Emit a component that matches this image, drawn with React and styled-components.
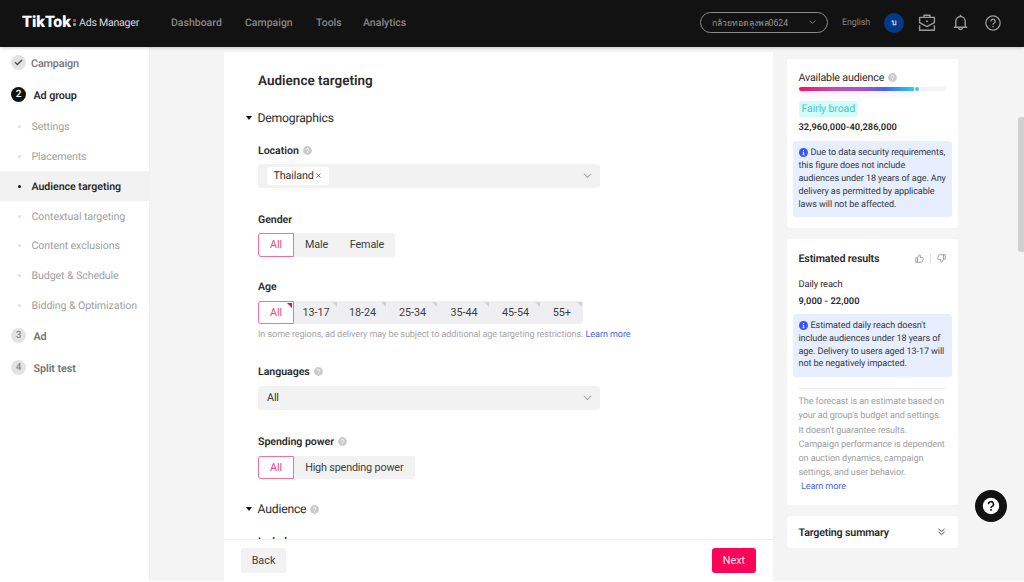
import React from 'react';
import styled, { createGlobalStyle } from 'styled-components';

const GlobalStyle = createGlobalStyle`
    * {
        box-sizing: border-box;
    }

    body {
        margin: 0;
        background: #ffffff;
        color: #2b2b2b;
        font-family: Roboto, "Noto Sans", "Liberation Sans", sans-serif;
        font-size: 11px;
        text-rendering: geometricPrecision;
        overflow: hidden;
    }

    button {
        font: inherit;
        border: 0;
        padding: 0;
    }

    svg {
        display: block;
        flex: none;
    }
`;

const Page = styled.div`
    display: flex;
    flex-direction: column;
    width: 1024px;
    height: 581px;
    background: #f4f4f4;
    white-space: nowrap;
    overflow: hidden;
`;

/* Header */
const Header = styled.header`
    display: flex;
    align-items: center;
    flex: none;
    height: 47px;
    padding: 0 23.5px 2px 22px;
    background: #121212;
    box-shadow: 0 1px 3px rgba(0, 0, 0, 0.2);
    z-index: 1;
`;
const Brand = styled.div`
    display: flex;
    align-items: center;
    width: 149px;
    color: #ffffff;
`;
const BrandName = styled.span`
    width: 51px;
    margin-top: -3px;
    font-size: 15.8px;
    font-weight: 900;
`;
const BrandDots = styled.span`
    display: grid;
    gap: 1px;
    width: 3px;
    margin: -1px 3px 0 0;

    &::before,
    &::after {
        content: '';
        width: 3px;
        height: 3px;
        border-radius: 1px;
        background: #e8255c;
    }

    &::after {
        background: #2bc4cb;
    }
`;
const BrandSub = styled.span`
    font-size: 10.6px;
    letter-spacing: -0.25px;
    color: #d8d8d8;
`;
const Nav = styled.nav`
    display: flex;
    gap: 23px;
    flex: 1;
`;
const NavLink = styled.a`
    width: ${props => props.$width}px;
    font-size: 10.5px;
    font-weight: 500;
    color: #868686;
`;
const Account = styled.button`
    display: flex;
    align-items: center;
    justify-content: space-between;
    width: 128.5px;
    height: 21px;
    padding: 0 11px;
    border: 1px solid #8c8c8c;
    border-radius: 11px;
    background: transparent;
    color: #969696;
    font-size: 8.7px;
`;
const Language = styled.span`
    width: 28px;
    margin: 0 14px;
    font-size: 9px;
    letter-spacing: -0.15px;
    color: #858585;
`;
const Avatar = styled.span`
    width: 20px;
    height: 20px;
    margin-right: 13.5px;
    border-radius: 50%;
    background: #003a88;
    color: #d5dcea;
    font-size: 8px;
    font-weight: 600;
    line-height: 20px;
    text-align: center;
`;
const HeaderIcons = styled.div`
    display: flex;
    align-items: center;
    gap: 17px;
    color: #9a9a9a;
`;

/* Sidebar */
const Body = styled.div`
    display: flex;
    flex: 1;
    min-height: 0;
`;
const Sidebar = styled.aside`
    flex: none;
    width: 150px;
    background: #ffffff;
    border-right: 1px solid #f0f0f0;
`;
const Step = styled.div`
    display: flex;
    align-items: center;
    height: 32px;
    padding-left: 11px;
    color: ${props => props.$color || '#747474'};
    font-size: 10.8px;
    font-weight: ${props => (props.$light ? 500 : 600)};
    letter-spacing: ${props => (props.$light ? -0.15 : -0.1)}px;
`;
const StepBadge = styled.span`
    display: grid;
    place-items: center;
    width: 15px;
    height: 15px;
    margin: -1px ${props => (props.$done ? 5 : 7.5)}px 0 0;
    border-radius: 50%;
    background: ${props => (props.$active ? '#121212' : '#e3e3e3')};
    color: ${props => (props.$active ? '#ffffff' : '#8b8b8b')};
    font-size: 10px;
    font-weight: 500;
    line-height: 16px;
`;
const SubStep = styled.div`
    display: flex;
    align-items: center;
    height: 29.9px;
    padding: 0.9px 0 0 17.5px;
    background: ${props => (props.$active ? '#f2f2f2' : 'transparent')};
    color: ${props => (props.$active ? '#2b2b2b' : '#a0a0a0')};
    font-size: 10.6px;
    font-weight: ${props => (props.$active ? 600 : 400)};
    letter-spacing: ${props => (props.$active ? -0.03 : -0.09)}px;

    &::before {
        content: '';
        width: 3px;
        height: 3px;
        margin-right: 11px;
        border-radius: 50%;
        background: ${props => (props.$active ? '#121212' : '#e0e0e0')};
    }
`;

/* Form */
const Panel = styled.main`
    display: flex;
    flex-direction: column;
    flex: none;
    width: 549px;
    margin: 5px 14px 0 74px;
    background: #ffffff;
`;
const Form = styled.div`
    flex: 1;
    min-height: 0;
    padding: 19px 34px 0;
    overflow: hidden;
`;
const Title = styled.h1`
    height: 20px;
    margin: 0 0 16.5px;
    font-size: 13.5px;
    font-weight: 600;
    line-height: 20px;
`;
const Section = styled.h2`
    display: flex;
    align-items: center;
    gap: 4px;
    height: 20px;
    margin: 0 0 15.5px -12px;
    font-size: 12.2px;
    font-weight: 400;
    letter-spacing: -0.2px;

    &::before {
        content: '';
        margin-right: 1.5px;
        border: 3.5px solid transparent;
        border-top: 4px solid #121212;
        border-bottom: 0;
    }
`;
const Field = styled.div`
    margin-bottom: ${props => props.$gap}px;
`;
const Label = styled.div`
    display: flex;
    align-items: center;
    gap: 4px;
    height: 14px;
    margin-bottom: ${props => props.$space || 6.5}px;
    font-size: 10.6px;
    font-weight: 600;
    letter-spacing: -0.05px;
`;
const Select = styled.div`
    display: flex;
    align-items: center;
    justify-content: space-between;
    width: 341.5px;
    height: 24px;
    padding: 0.5px 8px 0 9px;
    border-radius: 3px;
    background: #f2f2f2;
    color: #333333;
    font-size: 10.8px;
    letter-spacing: -0.15px;
`;
const Tag = styled.span`
    display: flex;
    align-items: center;
    gap: 2px;
    height: 18px;
    padding: 0 8px 0 6.5px;
    border-radius: 3px;
    background: #ffffff;
`;
const Segments = styled.div`
    display: flex;
    width: max-content;
    height: 23.5px;
    border-radius: 3px;
    background: ${props => (props.$age ? '#efeff1' : '#f2f2f2')};
`;
const Segment = styled.button`
    position: relative;
    width: ${props => props.$width}px;
    border: ${props => (props.$active ? '1px solid #f76e99' : '0')};
    border-radius: ${props => (props.$active ? '3px 0 0 3px' : '0')};
    background: ${props => (props.$active ? '#ffffff' : 'transparent')};
    color: ${props => (props.$active ? '#f5457c' : '#3d3d3d')};
    font-size: 10.8px;
    letter-spacing: ${props => (props.$corner ? -0.08 : -0.17)}px;
`;
const Corner = styled.span`
    position: absolute;
    top: 1px;
    right: 1px;
    border-top: 5px solid ${props => (props.$active ? '#f20a4f' : '#d2d2d4')};
    border-left: 5px solid transparent;
`;
const Note = styled.p`
    height: 14px;
    margin: 3px 0 0;
    font-size: 9.1px;
    line-height: 17px;
    letter-spacing: -0.1px;
    color: #a6a6a6;
`;
const Link = styled.a`
    color: #4a63f0;
`;
const Footer = styled.footer`
    display: flex;
    align-items: center;
    justify-content: space-between;
    flex: none;
    height: 42px;
    padding: 0 17px;
    border-top: 1px solid #f0f0f0;
`;
const Button = styled.button`
    width: ${props => (props.$primary ? 44 : 45)}px;
    height: 25px;
    border-radius: 3px;
    background: ${props => (props.$primary ? '#fb0558' : '#f2f2f2')};
    color: ${props => (props.$primary ? '#ffe3ec' : '#3d3d3d')};
    font-size: 10.8px;
`;

/* Right column */
const Aside = styled.aside`
    display: flex;
    flex-direction: column;
    flex: none;
    gap: 11px;
    width: 171px;
    padding-top: 12px;
`;
const Card = styled.section`
    height: ${props => props.$height}px;
    padding: 0 12px 0 11.5px;
    border-radius: 3px;
    background: #ffffff;
`;
const CardHead = styled.div`
    display: flex;
    align-items: center;
    gap: 4px;
    height: ${props => props.$height}px;
    padding-top: ${props => props.$drop || 0}px;
    font-size: 10.7px;
    font-weight: ${props => (props.$bold ? 600 : 400)};
    letter-spacing: -0.17px;
`;
const Spacer = styled.span`
    flex: 1;
`;
const HeadDivider = styled.span`
    width: 1px;
    height: 9px;
    margin: 0 2px;
    background: #dddddd;
`;
const Meter = styled.div`
    display: flex;
    align-items: center;
    gap: 1px;
    height: 4px;
    border-radius: 2px;
    background: #f3f3f3;
`;
const MeterFill = styled.div`
    width: 115px;
    height: 4px;
    border-radius: 2px 0 0 2px;
    background: linear-gradient(90deg, #fb0f5c 0%, #c34bb5 30%, #b44fc6 52%, #4664ee 75%, #25d3ea 100%);
    box-shadow: 0 3px 5px rgba(200, 90, 220, 0.13);
`;
const MeterDot = styled.div`
    width: 4px;
    height: 4px;
    border-radius: 50%;
    background: #25d3ea;
    box-shadow: 0 0 0 1px #ffffff;
`;
const Badge = styled.div`
    width: max-content;
    height: 15.5px;
    margin: 10px 0 4px;
    padding: 0 3px;
    border-radius: 3px;
    background: #d5fbf9;
    color: #45c9c6;
    font-size: 10.6px;
    letter-spacing: -0.12px;
    line-height: 16px;
`;
const Small = styled.div`
    height: ${props => props.$height}px;
    font-size: 9.3px;
    font-weight: ${props => (props.$bold ? 600 : 400)};
    line-height: ${props => props.$height + 1}px;
    letter-spacing: ${props => (props.$bold ? 0.06 : -0.12)}px;
`;
const Info = styled.div`
    margin: ${props => props.$top}px -6px 0;
    padding: 6px 0 5.5px 6px;
    border-radius: 3px;
    background: #e7eeff;
    color: #363a45;
    font-size: 9.1px;
    letter-spacing: -0.1px;
    line-height: 12.8px;
    white-space: pre;

    & svg {
        display: inline-block;
        margin-right: 3px;
        vertical-align: -2px;
    }
`;
const Forecast = styled.p`
    margin: 11.5px 0 0;
    padding-top: 6px;
    border-top: 1.5px solid #eeeeee;
    color: #a0a0a0;
    font-size: 9.1px;
    letter-spacing: -0.11px;
    line-height: 14.2px;
    white-space: pre;

    & a {
        margin-left: 2.5px;
    }
`;

/* Floating help and scroll thumb lie over the page */
const HelpButton = styled.button`
    position: fixed;
    top: 490px;
    left: 975px;
    display: grid;
    place-items: center;
    width: 32px;
    height: 32px;
    border-radius: 50%;
    background: #121212;
`;
const ScrollThumb = styled.div`
    position: fixed;
    top: 117px;
    right: 0;
    width: 6px;
    height: 135px;
    border-radius: 3px 0 0 3px;
    background: #d0d0d0;
`;

const steps = [
    'Settings',
    'Placements',
    'Audience targeting',
    'Contextual targeting',
    'Content exclusions',
    'Budget & Schedule',
    'Bidding & Optimization'
];
const ages = [
    ['All', 36],
    ['13-17', 44],
    ['18-24', 49],
    ['25-34', 51],
    ['35-44', 52],
    ['45-54', 51],
    ['55+', 41.5]
];

function Chevron({ color = '#a9a9a9', size = 9 }) {
    return (
        <svg width={size} height={size * 0.6} viewBox="0 0 10 6" fill="none" stroke={color} strokeWidth="1.2">
            <path d="M1 1l4 4 4-4" />
        </svg>
    );
}

function Hint() {
    return (
        <svg width="9" height="9" viewBox="0 0 9 9">
            <circle cx="4.5" cy="4.5" r="4.4" fill="#cbcbcb" />
            <path d="M3.2 3.6a1.3 1.3 0 1 1 1.9 1.2c-.4.2-.6.4-.6.8M4.5 6.4v.8" fill="none" stroke="#fff" strokeWidth=".8" />
        </svg>
    );
}

function InfoIcon() {
    return (
        <svg width="9" height="9" viewBox="0 0 9 9">
            <circle cx="4.5" cy="4.5" r="4.5" fill="#3955f6" />
            <path d="M4.5 2v1M3.7 4h.9v2.6M3.5 6.7h2" fill="none" stroke="#fff" strokeWidth=".9" />
        </svg>
    );
}

function Thumb({ down }) {
    return (
        <svg width="9" height="9" viewBox="0 0 12 12" fill="none" stroke="#969696" strokeWidth="1.2" strokeLinejoin="round">
            <path
                transform={down ? 'rotate(180 6 6)' : undefined}
                d="M1 5.2h2.2L5.6 1c1.3 0 1.8.8 1.5 1.9l-.4 1.6h3c1 0 1.5.7 1.3 1.5L10 9.9c-.2.7-.6 1.1-1.3 1.1H1zM3.3 5.2V11"
            />
        </svg>
    );
}

function TopBar() {
    return (
        <Header>
            <Brand>
                <BrandName>TikTok</BrandName>
                <BrandDots />
                <BrandSub>Ads Manager</BrandSub>
            </Brand>
            <Nav>
                <NavLink $width={51}>Dashboard</NavLink>
                <NavLink $width={48}>Campaign</NavLink>
                <NavLink $width={24}>Tools</NavLink>
                <NavLink $width={43}>Analytics</NavLink>
            </Nav>
            <Account>
                กล้วยทอดลุงพล0624
                <Chevron color="#858585" size={7} />
            </Account>
            <Language>English</Language>
            <Avatar>บ</Avatar>
            <HeaderIcons>
                <svg width="18" height="18" viewBox="0 0 18 18" fill="none" stroke="currentColor" strokeWidth="1.4" strokeLinejoin="round">
                    <path d="M6 3.4V1.3h6v2.1M1.6 8.6V3.4h14.8v5.2L9 12.6zM1.6 11.2v5h14.8v-5" />
                    <path d="M8 6.9h2L9 8.2z" fill="currentColor" strokeWidth=".6" />
                </svg>
                <svg width="15" height="18" viewBox="0 0 15 18" fill="none" stroke="currentColor" strokeWidth="1.4" strokeLinejoin="round">
                    <path d="M.8 13.3h13.4M2.8 13.3V7.2a4.7 4.7 0 0 1 9.4 0v6.1M5.5 13.5c.2 2.8 3.8 2.8 4 0M7.5 2.3V.8" />
                </svg>
                <svg width="16" height="16" viewBox="0 0 17 17" fill="none" stroke="currentColor" strokeWidth="1.4">
                    <circle cx="8.5" cy="8.5" r="7.6" />
                    <path d="M6.2 6.8a2.3 2.3 0 1 1 3.4 2c-.8.4-1.1.8-1.1 1.6M8.5 11.7v1.4" />
                </svg>
            </HeaderIcons>
        </Header>
    );
}

function Steps() {
    return (
        <Sidebar>
            <Step $light>
                <StepBadge $done>
                    <svg width="9" height="7" viewBox="0 0 9 7" fill="none" stroke="#4a4a4a" strokeWidth="1.3">
                        <path d="M1 3.2l2.4 2.3L8 1" />
                    </svg>
                </StepBadge>
                Campaign
            </Step>
            <Step $color="#2b2b2b">
                <StepBadge $active>2</StepBadge>
                Ad group
            </Step>
            {steps.map(step => (
                <SubStep key={step} $active={step === 'Audience targeting'}>{step}</SubStep>
            ))}
            <Step>
                <StepBadge>3</StepBadge>
                Ad
            </Step>
            <Step>
                <StepBadge>4</StepBadge>
                Split test
            </Step>
        </Sidebar>
    );
}

function TargetingForm() {
    return (
        <Panel>
            <Form>
                <Title>Audience targeting</Title>
                <Section>Demographics</Section>
                <Field $gap={25}>
                    <Label>Location <Hint /></Label>
                    <Select>
                        <Tag>
                            Thailand
                            <svg width="5" height="5" viewBox="0 0 5 5" stroke="#555" strokeWidth=".8">
                                <path d="M.5.5l4 4M4.5.5l-4 4" />
                            </svg>
                        </Tag>
                        <Chevron />
                    </Select>
                </Field>
                <Field $gap={23}>
                    <Label>Gender</Label>
                    <Segments>
                        <Segment $width={36} $active>All</Segment>
                        <Segment $width={45}>Male</Segment>
                        <Segment $width={56}>Female</Segment>
                    </Segments>
                </Field>
                <Field $gap={23.5}>
                    <Label $space={7}>Age</Label>
                    <Segments $age>
                        {ages.map(([age, width]) => (
                            <Segment key={age} $width={width} $active={age === 'All'} $corner>
                                {age}
                                <Corner $active={age === 'All'} />
                            </Segment>
                        ))}
                    </Segments>
                    <Note>
                        In some regions, ad delivery may be subject to additional age targeting restrictions. <Link>Learn more</Link>
                    </Note>
                </Field>
                <Field $gap={25}>
                    <Label $space={7}>Languages <Hint /></Label>
                    <Select>
                        All
                        <Chevron />
                    </Select>
                </Field>
                <Field $gap={20}>
                    <Label $space={7}>Spending power <Hint /></Label>
                    <Segments>
                        <Segment $width={36} $active>All</Segment>
                        <Segment $width={120.5}>High spending power</Segment>
                    </Segments>
                </Field>
                <Section>Audience <Hint /></Section>
                <Label>Include</Label>
            </Form>
            <Footer>
                <Button>Back</Button>
                <Button $primary>Next</Button>
            </Footer>
        </Panel>
    );
}

function Estimates() {
    return (
        <Aside>
            <Card $height={169}>
                <CardHead $height={28.4} $drop={8}>
                    <span>Available audience</span>
                    <Hint />
                </CardHead>
                <Meter>
                    <MeterFill />
                    <MeterDot />
                </Meter>
                <Badge>Fairly broad</Badge>
                <Small $height={12} $bold>32,960,000-40,286,000</Small>
                <Info $top={8.6}>
                    <InfoIcon />
                    {'Due to data security requirements,\nthis figure does not include\naudiences under 18 years of age. Any\ndelivery as permitted by applicable\nlaws will not be affected.'}
                </Info>
            </Card>
            <Card $height={266}>
                <CardHead $height={37} $drop={1} $bold>
                    <span>Estimated results</span>
                    <Spacer />
                    <Thumb />
                    <HeadDivider />
                    <Thumb down />
                </CardHead>
                <Small $height={16}>Daily reach</Small>
                <Small $height={18} $bold>9,000 - 22,000</Small>
                <Info $top={4}>
                    <InfoIcon />
                    {'Estimated daily reach doesn\'t\ninclude audiences under 18 years of\nage. Delivery to users aged 13-17 will\nnot be negatively impacted.'}
                </Info>
                <Forecast>
                    {'The forecast is an estimate based on\nyour ad group\'s budget and settings.\nIt doesn\'t guarantee results.\nCampaign performance is dependent\non auction dynamics, campaign\nsettings, and user behavior.\n'}
                    <Link>Learn more</Link>
                </Forecast>
            </Card>
            <Card $height={32}>
                <CardHead $height={32} $bold>
                    <span>Targeting summary</span>
                    <Spacer />
                    <svg width="9" height="8" viewBox="0 0 9 8" fill="none" stroke="#444" strokeWidth="1">
                        <path d="M1.5 1l3 2.6 3-2.6M1.5 4l3 2.6 3-2.6" />
                    </svg>
                </CardHead>
            </Card>
        </Aside>
    );
}

function App() {
    return (
        <>
            <GlobalStyle />
            <Page>
                <TopBar />
                <Body>
                    <Steps />
                    <TargetingForm />
                    <Estimates />
                </Body>
            </Page>
            <HelpButton>
                <svg width="18" height="18" viewBox="0 0 18 18">
                    <circle cx="9" cy="9" r="8.2" fill="#fff" />
                    <path d="M6.5 7.2a2.5 2.5 0 1 1 3.6 2.2c-.8.4-1.1.7-1.1 1.5M9 12v1.7" fill="none" stroke="#121212" strokeWidth="1.6" />
                </svg>
            </HelpButton>
            <ScrollThumb />
        </>
    );
}

export default App;
